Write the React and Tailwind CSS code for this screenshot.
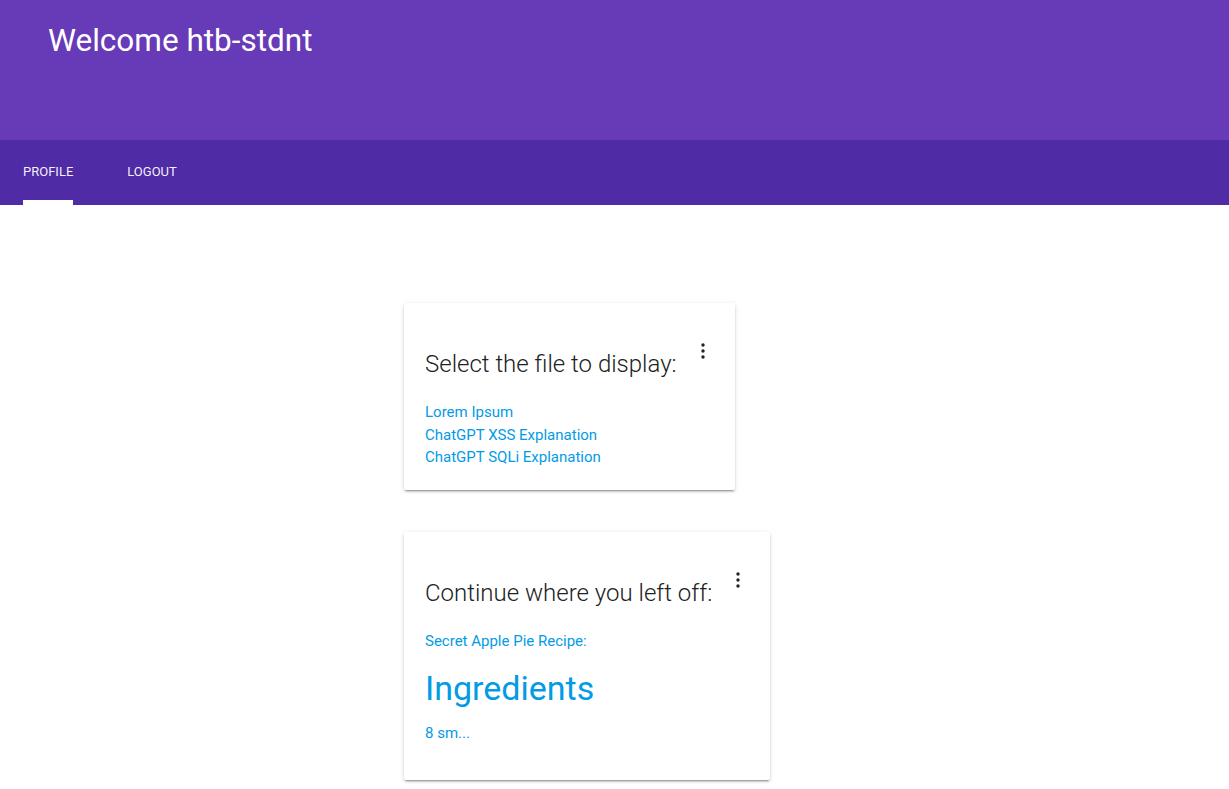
import React from "react";

function Dots() {
  return (
    <svg width="24" height="24" viewBox="0 0 24 24" className="block">
      <circle cx="12" cy="6" r="1.7" fill="#212121" />
      <circle cx="12" cy="12" r="1.7" fill="#212121" />
      <circle cx="12" cy="18" r="1.7" fill="#212121" />
    </svg>
  );
}

function Card({ width, title, children, pb }) {
  return (
    <div
      className={`bg-white rounded-[2px] shadow-[0_2px_2px_0_rgba(0,0,0,0.14),0_3px_1px_-2px_rgba(0,0,0,0.2),0_1px_5px_0_rgba(0,0,0,0.12)] pl-[21px] pt-[36px] ${width} ${pb}`}
    >
      <div className="flex items-start">
        <h2 className="mt-[9px] text-[24px] leading-[32px] font-light text-[#212121] whitespace-nowrap">
          {title}
        </h2>
        <div className="ml-[14px]">
          <Dots />
        </div>
      </div>
      <div className="mt-[21px]">{children}</div>
    </div>
  );
}

export default function App() {
  return (
    <div
      className="min-h-[789px] bg-white"
      style={{ fontFamily: "Roboto, 'Noto Sans', sans-serif" }}
    >
      <header className="h-[140px] bg-[#673ab7] pl-[48px] pt-[21px]">
        <h1 className="text-[31.5px] leading-[40px] font-normal text-white">
          Welcome htb-stdnt
        </h1>
      </header>
      <nav className="h-[65px] bg-[#4f2ca6] flex pl-[23px] gap-[54px]">
        <div className="relative flex items-center h-full pb-[2px]">
          <span className="text-[13px] font-normal text-white/95">PROFILE</span>
          <div className="absolute left-0 w-[50px] bottom-0 h-[5px] bg-white" />
        </div>
        <div className="flex items-center h-full pb-[2px]">
          <span className="text-[13px] font-normal text-white/95">LOGOUT</span>
        </div>
      </nav>
      <main className="w-[421px] mx-auto pt-[98px] flex flex-col items-start gap-[42px]">
        <Card width="w-[331px]" title="Select the file to display:" pb="pb-[21px]">
          <div className="text-[15px] leading-[22.5px] text-[#039be5]">
            <div>Lorem Ipsum</div>
            <div>ChatGPT XSS Explanation</div>
            <div>ChatGPT SQLi Explanation</div>
          </div>
        </Card>
        <Card width="w-[366px]" title="Continue where you left off:" pb="pb-[35px]">
          <div className="text-[#039be5]">
            <div className="text-[15px] leading-[22.5px]">Secret Apple Pie Recipe:</div>
            <div className="mt-[14px] text-[34px] leading-[44px] font-normal">Ingredients</div>
            <div className="mt-[12px] text-[15px] leading-[22.5px]">8 sm...</div>
          </div>
        </Card>
      </main>
    </div>
  );
}
